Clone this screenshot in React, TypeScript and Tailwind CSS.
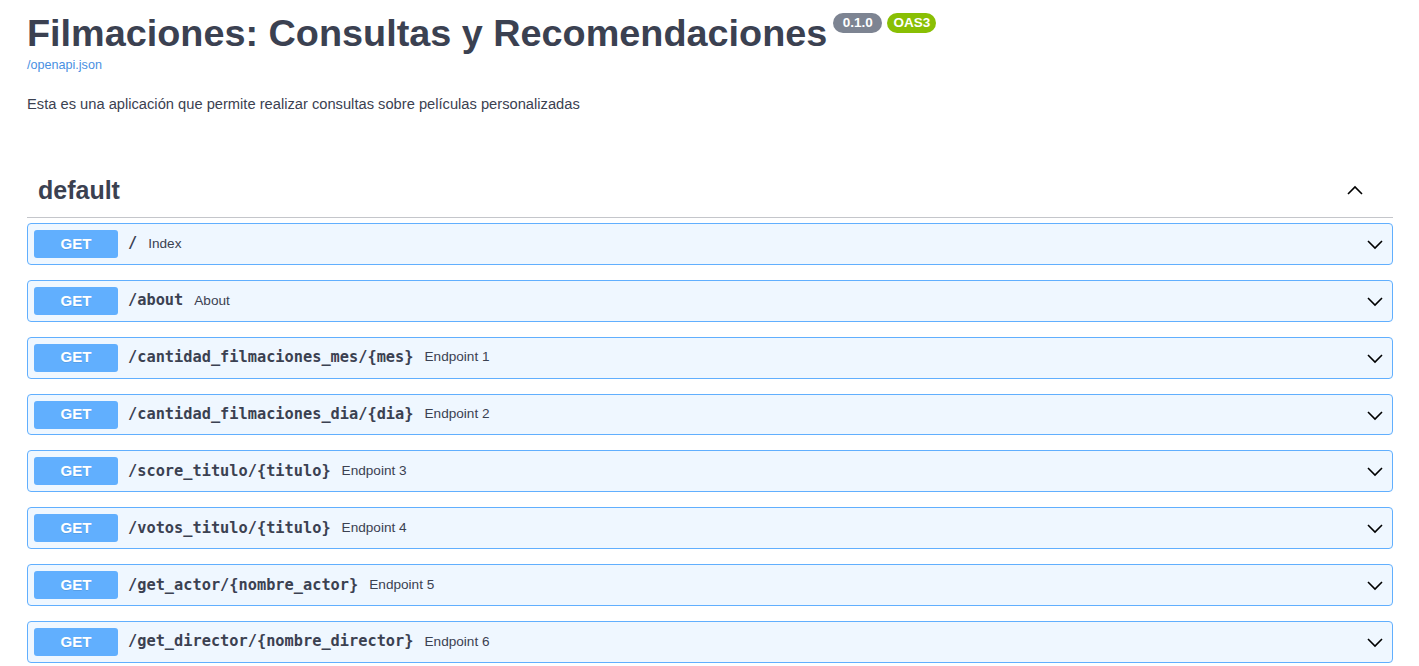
import React from 'react';

const endpoints = [
    { path: '/', summary: 'Index' },
    { path: '/about', summary: 'About' },
    { path: '/cantidad_filmaciones_mes/{mes}', summary: 'Endpoint 1' },
    { path: '/cantidad_filmaciones_dia/{dia}', summary: 'Endpoint 2' },
    { path: '/score_titulo/{titulo}', summary: 'Endpoint 3' },
    { path: '/votos_titulo/{titulo}', summary: 'Endpoint 4' },
    { path: '/get_actor/{nombre_actor}', summary: 'Endpoint 5' },
    { path: '/get_director/{nombre_director}', summary: 'Endpoint 6' },
];

const Chevron: React.FC<{ up?: boolean }> = ({ up }) => (
    <svg width="20" height="20" viewBox="0 0 20 20" className="shrink-0">
        {up ? (
            <path d="M3 14 L10 7 L17 14" fill="none" stroke="#000" strokeWidth="1.6" />
        ) : (
            <path d="M3 7 L10 14 L17 7" fill="none" stroke="#000" strokeWidth="1.6" />
        )}
    </svg>
);

const App: React.FC = () => {
    return (
        <div className="min-h-screen bg-white pl-[27px] pr-[26px] text-[#3b4151] font-['Liberation_Sans',Arial,sans-serif]">
            {/* Info */}
            <div className="pt-[11px]">
                <div className="flex items-start">
                    <h2 className="text-[37.8px] font-bold leading-[44px]">Filmaciones: Consultas y Recomendaciones</h2>
                    <span className="ml-[6px] mt-[2px] flex h-[20px] w-[49px] items-center justify-center rounded-full bg-[#7d8492] text-[13.5px] font-bold text-white">0.1.0</span>
                    <span className="ml-[5px] mt-[2px] flex h-[20px] w-[49px] items-center justify-center rounded-full bg-[#89bf04] text-[13.5px] font-bold text-white">OAS3</span>
                </div>
                <a className="mt-[2px] block text-[12.6px] leading-[16px] text-[#4990e2]">/openapi.json</a>
                <p className="mt-[21px] text-[14.7px] leading-[20px]">Esta es una aplicación que permite realizar consultas sobre películas personalizadas</p>
            </div>

            {/* Tag section */}
            <div className="mt-[61px]">
                <div className="flex items-center border-b border-[#c4c6cb] pb-[12px] pl-[11px] pr-[28px]">
                    <h3 className="flex-1 text-[25px] font-bold leading-[30px]">default</h3>
                    <Chevron up />
                </div>
                <div className="mt-[5px] flex flex-col gap-[15px]">
                    {endpoints.map((e) => (
                        <div
                            key={e.path}
                            className="flex h-[41.86px] items-center rounded-[4px] border border-[#61affe] bg-[#eff7ff] pl-[6px] pr-[7px]"
                        >
                            <span className="flex h-[28px] w-[84px] items-center justify-center rounded-[3px] bg-[#61affe] text-[15px] font-bold text-white [text-shadow:0_1px_0_rgba(0,0,0,0.1)]">
                                GET
                            </span>
                            <span className="ml-[10px] font-['DejaVu_Sans_Mono',monospace] text-[15.3px] font-bold text-[#3b4151]">
                                {e.path}
                            </span>
                            <span className="ml-[11px] flex-1 text-[13.6px] text-[#3b4151]">{e.summary}</span>
                            <Chevron />
                        </div>
                    ))}
                </div>
            </div>
        </div>
    );
};

export default App;
